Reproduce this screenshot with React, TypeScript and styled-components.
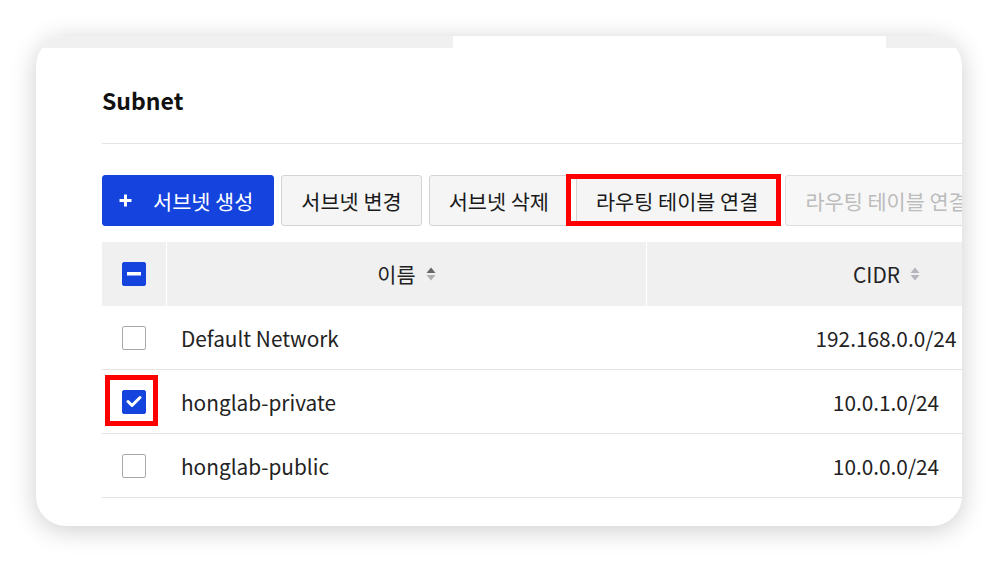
import React from "react";
import styled, { createGlobalStyle } from "styled-components";

const Global = createGlobalStyle`
  html, body { margin: 0; padding: 0; background: #ffffff; }
  body { font-family: "Noto Sans CJK KR", "Noto Sans", sans-serif; color: #222; }
  * { box-sizing: border-box; }
`;

const Page = styled.div`
  width: 998px;
  height: 562px;
  padding: 36px 36px 0 36px;
  background: #fff;
`;

const Card = styled.div`
  width: 926px;
  height: 490px;
  border-radius: 30px;
  background: #fff;
  overflow: hidden;
  box-shadow: 0 4px 26px rgba(0, 0, 0, 0.2);
  display: flex;
  flex-direction: column;
`;

const TabStrip = styled.div`
  display: flex;
  height: 12px;
  flex-shrink: 0;
`;

const TabSeg = styled.div<{ $w?: number; $active?: boolean }>`
  width: ${(p) => (p.$w ? `${p.$w}px` : "auto")};
  flex: ${(p) => (p.$w ? "0 0 auto" : "1 1 auto")};
  background: ${(p) => (p.$active ? "#ffffff" : "#f0f0f0")};
`;

const Content = styled.div`
  padding-left: 66px;
  width: 1200px;
`;

const TitleBar = styled.div`
  height: 96px;
  display: flex;
  align-items: flex-end;
  padding-bottom: 31px;
  border-bottom: 1px solid #e4e4e4;
  width: 860px;
`;

const Title = styled.h1`
  margin: 0;
  font-size: 23px;
  font-weight: 700;
  line-height: 1;
  color: #111;
`;

const Toolbar = styled.div`
  display: flex;
  gap: 7px;
  margin-top: 31px;
  height: 51px;
`;

const Button = styled.button<{ $variant?: "primary" | "default" | "disabled" }>`
  position: relative;
  height: 51px;
  padding: 0 19px;
  border-radius: 3px;
  font-family: inherit;
  font-size: 20.8px;
  font-weight: 400;
  white-space: nowrap;
  display: inline-flex;
  align-items: center;
  gap: 21px;
  flex-shrink: 0;
  border: 1px solid
    ${(p) =>
      p.$variant === "primary" ? "#1443de" : p.$variant === "disabled" ? "#dedede" : "#d4d4d4"};
  background: ${(p) =>
    p.$variant === "primary" ? "#1443de" : p.$variant === "disabled" ? "#f7f7f7" : "#f5f5f5"};
  color: ${(p) =>
    p.$variant === "primary" ? "#ffffff" : p.$variant === "disabled" ? "#bcbcbc" : "#1a1a1a"};
  padding-left: ${(p) => (p.$variant === "primary" ? "16px" : "19px")};
  padding-right: ${(p) => (p.$variant === "primary" ? "20px" : "19px")};
`;

const Highlight = styled.span<{ $l: number; $r: number; $t: number; $b: number }>`
  position: absolute;
  left: ${(p) => p.$l}px;
  right: ${(p) => p.$r}px;
  top: ${(p) => p.$t}px;
  bottom: ${(p) => p.$b}px;
  border: 5px solid #ff0000;
  pointer-events: none;
`;

const Table = styled.div`
  margin-top: 16px;
  display: grid;
  grid-template-columns: 64px 480px 480px;
  width: 1024px;
`;

const HeadCell = styled.div<{ $first?: boolean }>`
  height: 64px;
  background: #f0f0f0;
  display: flex;
  align-items: center;
  justify-content: center;
  gap: 10px;
  font-size: 20.8px;
  color: #222;
  border-left: ${(p) => (p.$first ? "none" : "1px solid #ffffff")};
`;

const Cell = styled.div<{ $align?: "left" | "center" }>`
  height: 64px;
  display: flex;
  align-items: center;
  justify-content: ${(p) => (p.$align === "center" ? "center" : "flex-start")};
  padding-left: ${(p) => (p.$align === "left" ? "15px" : "0")};
  font-size: 20.8px;
  color: #222;
  border-bottom: 1px solid #e3e3e3;
`;

const CheckCell = styled(Cell)`
  justify-content: center;
`;

const Box = styled.span<{ $checked?: boolean }>`
  position: relative;
  width: 24px;
  height: 24px;
  border-radius: 2px;
  display: inline-flex;
  align-items: center;
  justify-content: center;
  background: ${(p) => (p.$checked ? "#1443de" : "#fff")};
  border: 1px solid ${(p) => (p.$checked ? "#1443de" : "#a9a9a9")};
`;

const Sort: React.FC<{ $active?: boolean }> = ({ $active }) => (
  <svg width="10" height="16" viewBox="0 0 10 16">
    <path d="M5 1.5 L9.5 7 L0.5 7 Z" fill={$active ? "#666" : "#b5b5c0"} />
    <path d="M5 14.5 L9.5 9 L0.5 9 Z" fill={$active ? "#b0b0b0" : "#b5b5c0"} />
  </svg>
);

const Plus = () => (
  <svg width="13" height="13" viewBox="0 0 13 13">
    <path d="M6.5 0.5 V12.5 M0.5 6.5 H12.5" stroke="#fff" strokeWidth="3" />
  </svg>
);

const Check = () => (
  <svg width="16" height="13" viewBox="0 0 16 13">
    <path d="M2 6.5 L6 10.5 L14 2.5" stroke="#fff" strokeWidth="3" fill="none" strokeLinecap="round" strokeLinejoin="round" />
  </svg>
);

const Dash = () => (
  <svg width="14" height="4" viewBox="0 0 14 4">
    <rect x="0" y="0" width="14" height="3.5" fill="#fff" />
  </svg>
);

const rows = [
  { name: "Default Network", cidr: "192.168.0.0/24", checked: false },
  { name: "honglab-private", cidr: "10.0.1.0/24", checked: true },
  { name: "honglab-public", cidr: "10.0.0.0/24", checked: false },
];

export default function App() {
  return (
    <>
      <Global />
      <Page>
        <Card>
          <TabStrip>
            <TabSeg $w={417} />
            <TabSeg $w={433} $active />
            <TabSeg />
          </TabStrip>
          <Content>
            <TitleBar>
              <Title>Subnet</Title>
            </TitleBar>
            <Toolbar>
              <Button $variant="primary">
                <Plus />
                서브넷 생성
              </Button>
              <Button>서브넷 변경</Button>
              <Button>서브넷 삭제</Button>
              <Button>
                라우팅 테이블 연결
                <Highlight $l={-11} $r={-4} $t={-2} $b={-1} />
              </Button>
              <Button $variant="disabled">라우팅 테이블 연결 해제</Button>
            </Toolbar>
            <Table>
              <HeadCell $first>
                <Box $checked>
                  <Dash />
                </Box>
              </HeadCell>
              <HeadCell>
                이름 <Sort $active />
              </HeadCell>
              <HeadCell>
                CIDR <Sort />
              </HeadCell>
              {rows.map((r) => (
                <React.Fragment key={r.name}>
                  <CheckCell>
                    <Box $checked={r.checked}>
                      {r.checked && <Check />}
                      {r.checked && <Highlight $l={-18} $r={-13} $t={-16} $b={-13} />}
                    </Box>
                  </CheckCell>
                  <Cell $align="left">{r.name}</Cell>
                  <Cell $align="center">{r.cidr}</Cell>
                </React.Fragment>
              ))}
            </Table>
          </Content>
        </Card>
      </Page>
    </>
  );
}
